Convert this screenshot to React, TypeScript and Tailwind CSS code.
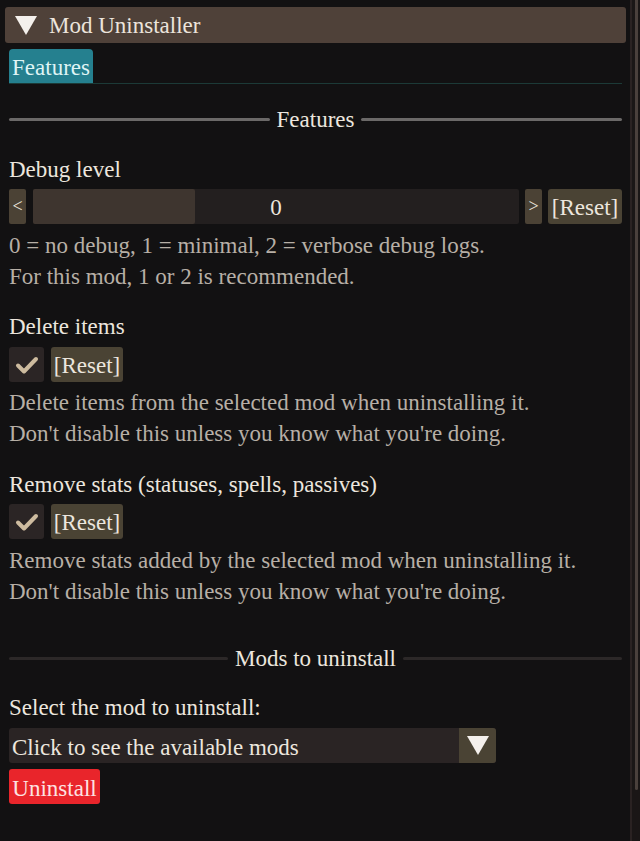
import React, { useState } from 'react';

const font = { fontFamily: '"Liberation Serif", "Times New Roman", serif' };

const Separator: React.FC<{ label: string; bright?: boolean }> = ({ label, bright }) => (
  <div className="flex h-[30px] items-center gap-[7px]">
    <div className={`h-[3px] flex-1 rounded-full ${bright ? 'bg-[#6b6968]' : 'bg-[#2c2828]'}`} />
    <span className="pt-[1px] text-[23px] leading-[30px] text-[#ece6de]">{label}</span>
    <div className={`h-[3px] flex-1 rounded-full ${bright ? 'bg-[#6b6968]' : 'bg-[#2c2828]'}`} />
  </div>
);

const ResetButton: React.FC<{ wide?: boolean }> = ({ wide }) => (
  <button
    className={`h-[35px] shrink-0 rounded-[3px] bg-[#4a4334] text-center text-[23px] leading-[38px] text-[#ece6de] ${
      wide ? 'w-[74px]' : 'w-[72px]'
    }`}
  >
    [Reset]
  </button>
);

const Checkbox: React.FC<{ checked: boolean; onToggle: () => void }> = ({ checked, onToggle }) => (
  <button
    onClick={onToggle}
    className="flex h-[35px] w-[35px] items-center justify-center rounded-[3px] bg-[#2b2525]"
  >
    {checked && (
      <svg width="24" height="20" viewBox="0 0 24 20">
        <path d="M3 10.5 L9 16.5 L21 4" fill="none" stroke="#cdbb9f" strokeWidth="4" strokeLinecap="round" strokeLinejoin="round" />
      </svg>
    )}
  </button>
);

const Label: React.FC<{ text: string; className?: string }> = ({ text, className }) => (
  <div className={`pt-[1px] text-[23px] leading-[31px] text-[#ece6de] ${className ?? ''}`}>{text}</div>
);

const Desc: React.FC<{ lines: string[]; className?: string }> = ({ lines, className }) => (
  <div className={`pt-[1px] text-[23px] leading-[31px] text-[#b7afa6] ${className ?? ''}`}>
    {lines.map((line) => (
      <div key={line}>{line}</div>
    ))}
  </div>
);

export default function App() {
  const [deleteItems, setDeleteItems] = useState(true);
  const [removeStats, setRemoveStats] = useState(true);
  const [debugLevel, setDebugLevel] = useState(0);

  return (
    <div className="flex h-[841px] w-full overflow-hidden bg-[#121112] font-['Liberation_Serif',serif]" style={font}>
      <div className="flex-1 pl-[5px] pr-[4px] pt-[7px]">
        {/* collapsing header */}
        <div className="flex h-[36px] items-center gap-[12px] rounded-[3px] bg-[#4f4139] pl-[10px]">
          <svg width="22" height="19" viewBox="0 0 22 19">
            <path d="M0 0 H22 L11 19 Z" fill="#f4f0ec" />
          </svg>
          <span className="pt-[2px] text-[23px] text-[#ece4dc]">Mod Uninstaller</span>
        </div>

        <div className="pl-[4px] pr-[4px]">
          {/* tab bar */}
          <div className="mt-[6px] flex">
            <div className="h-[34px] w-[84px] rounded-t-[4px] bg-[#25808f] text-center text-[23px] leading-[37px] text-[#dff4f5]">
              Features
            </div>
          </div>
          <div className="h-px bg-[#1c3a37]" />

          <div className="mt-[20px]">
            <Separator label="Features" bright />
          </div>

          <Label className="mt-[19px]" text="Debug level" />
          <div className="mt-[4px] flex h-[35px] items-center gap-[7px]">
            <button
              onClick={() => setDebugLevel(Math.max(0, debugLevel - 1))}
              className="h-[35px] w-[17px] shrink-0 rounded-[2px] bg-[#4b4235] text-[18px] text-[#ece6de]"
            >
              &lt;
            </button>
            <div className="relative flex h-[35px] flex-1 items-center justify-center rounded-[2px] bg-[#231f1f]">
              <div className="absolute left-0 top-0 h-full w-[162px] rounded-[2px] bg-[#3e352f]" />
              <span className="relative pt-[3px] text-[23px] text-[#ece6de]">{debugLevel}</span>
            </div>
            <button
              onClick={() => setDebugLevel(Math.min(2, debugLevel + 1))}
              className="-ml-[1px] h-[35px] w-[17px] shrink-0 rounded-[2px] bg-[#4b4235] text-[18px] text-[#ece6de]"
            >
              &gt;
            </button>
            <div className="-ml-[1px]">
              <ResetButton wide />
            </div>
          </div>
          <Desc
            className="mt-[5px]"
            lines={['0 = no debug, 1 = minimal, 2 = verbose debug logs.', 'For this mod, 1 or 2 is recommended.']}
          />

          <Label className="mt-[18px]" text="Delete items" />
          <div className="mt-[5px] flex items-center gap-[7px]">
            <Checkbox checked={deleteItems} onToggle={() => setDeleteItems(!deleteItems)} />
            <ResetButton />
          </div>
          <Desc
            className="mt-[4px]"
            lines={[
              'Delete items from the selected mod when uninstalling it.',
              "Don't disable this unless you know what you're doing.",
            ]}
          />

          <Label className="mt-[19px]" text="Remove stats (statuses, spells, passives)" />
          <div className="mt-[4px] flex items-center gap-[7px]">
            <Checkbox checked={removeStats} onToggle={() => setRemoveStats(!removeStats)} />
            <ResetButton />
          </div>
          <Desc
            className="mt-[5px]"
            lines={[
              'Remove stats added by the selected mod when uninstalling it.',
              "Don't disable this unless you know what you're doing.",
            ]}
          />

          <div className="mt-[36px]">
            <Separator label="Mods to uninstall" />
          </div>

          <Label className="mt-[18px]" text="Select the mod to uninstall:" />
          <div className="mt-[5px] flex h-[35px] w-[487px] items-stretch rounded-[3px] bg-[#2a2424]">
            <span className="flex-1 pl-[3px] text-[23px] leading-[39px] text-[#ece6de]">
              Click to see the available mods
            </span>
            <div className="flex w-[37px] items-center justify-center rounded-r-[3px] bg-[#4a4334]">
              <svg width="22" height="19" viewBox="0 0 22 19">
                <path d="M0 0 H22 L11 19 Z" fill="#f4f0ec" />
              </svg>
            </div>
          </div>
          <button className="mt-[6px] h-[35px] w-[91px] rounded-[3px] bg-[#e9252b] text-center text-[23px] leading-[39px] text-[#fde2e2]">
            Uninstall
          </button>
        </div>
      </div>

      {/* scrollbar */}
      <div className="flex w-[10px] justify-center border-l-[2px] border-[#2a2222] bg-[#1a1616]">
        <div className="h-[790px] w-[3px] rounded-b-full bg-[#4a403c]" />
      </div>
    </div>
  );
}
